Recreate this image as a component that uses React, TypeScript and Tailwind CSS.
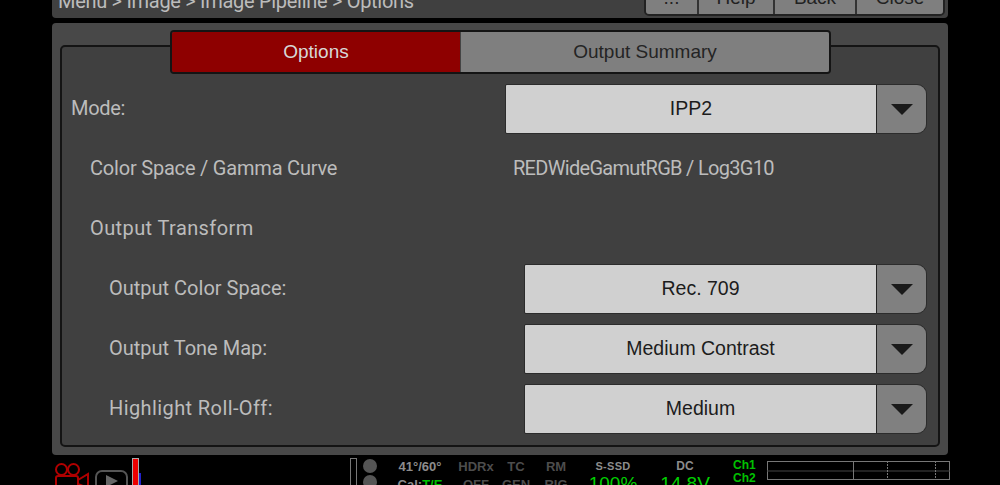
const labelFont = "font-['Roboto',sans-serif] text-[20px] text-[#bcbcbc] mb-[2px]";
const btnFont = "font-['Liberation_Sans',sans-serif]";

function Dropdown({ value, width }: { value: string; width: string }) {
  return (
    <div className={`flex h-[50px] ${width} overflow-hidden rounded-r-[10px] rounded-l-[2px] border border-[#2c2c2c]`}>
      <div className={`flex flex-1 items-center justify-center bg-[#d0d0d0] text-[19.5px] text-[#1c1c1c] ${btnFont}`}>
        {value}
      </div>
      <div className="flex w-[50px] items-center justify-center border-l border-[#222] bg-[#808080]">
        <svg width="24" height="12" viewBox="0 0 24 12">
          <path d="M1 1h22L12 12z" fill="#1a1a1a" />
        </svg>
      </div>
    </div>
  );
}

function Row({ label, indent, children }: { label: string; indent: string; children?: React.ReactNode }) {
  return (
    <div className="flex h-[50px] items-center justify-between">
      <span className={`${indent} ${labelFont}`}>{label}</span>
      {children}
    </div>
  );
}

function Stat({ top, bottom }: { top: string; bottom: string }) {
  return (
    <div className={`flex w-[40px] flex-col items-center text-[13px] font-bold leading-[18px] text-[#4d4d4d] ${btnFont}`}>
      <span>{top}</span>
      <span>{bottom}</span>
    </div>
  );
}

export default function App() {
  return (
    <div className="flex h-[485px] w-[1000px] flex-col overflow-hidden bg-black">
      {/* Title bar, cut off by the top of the picture */}
      <div className="mx-[52px] -mt-[22px] flex h-[40px] shrink-0 items-start justify-between rounded-b-[4px] bg-[#404040] pl-[6px] pr-[3px]">
        <span className={`mt-[8px] tracking-[-0.3px] ${labelFont}`}>Menu &gt; Image &gt; Image Pipeline &gt; Options</span>
        <div className={`flex h-[38px] items-end overflow-hidden rounded-b-[5px] border-2 border-[#222] text-[19px] text-[#222] ${btnFont}`}>
          <div className="flex h-full w-[53px] items-center justify-center border-r-2 border-[#333] bg-[#7f7f7f] pt-[2px]">...</div>
          <div className="flex h-full w-[76px] items-center justify-center border-r-2 border-[#333] bg-[#7f7f7f] pt-[2px]">Help</div>
          <div className="flex h-full w-[82px] items-center justify-center border-r-2 border-[#333] bg-[#7f7f7f] pt-[2px]">Back</div>
          <div className="flex h-full w-[86px] items-center justify-center bg-[#7f7f7f] pt-[2px]">Close</div>
        </div>
      </div>

      {/* Main panel */}
      <div className="mx-[52px] mt-[5px] h-[432px] shrink-0 rounded-[4px] bg-[#484848] px-[8px] pb-[8px] pt-[22px]">
        <div className="h-[402px] rounded-[5px] border-2 border-[#141414] bg-[#404040] pl-[10px] pr-[11px]">
          <div className={`-mt-[17px] ml-[98px] flex h-[44px] w-[661px] overflow-hidden rounded-[4px] border-2 border-[#141414] text-[19px] ${btnFont}`}>
            <div className="flex w-[289px] items-center justify-center border-r border-[#444] bg-[#8e0000] text-[#d8d8d8]">
              Options
            </div>
            <div className="flex flex-1 items-center justify-center bg-[#7f7f7f] text-[#242424]">
              Output Summary
            </div>
          </div>

          <div className="mt-[10px] flex flex-col gap-[10px]">
            <Row label="Mode:" indent="-ml-[1px] tracking-[-0.3px]">
              <Dropdown value="IPP2" width="w-[422px]" />
            </Row>
            <div className="flex h-[50px] items-center">
              <span className={`ml-[18px] w-[423px] tracking-[-0.2px] ${labelFont}`}>Color Space / Gamma Curve</span>
              <span className={`tracking-[-0.7px] ${labelFont}`}>REDWideGamutRGB / Log3G10</span>
            </div>
            <Row label="Output Transform" indent="ml-[18px] tracking-[0.4px]" />
            <Row label="Output Color Space:" indent="ml-[37px]">
              <Dropdown value="Rec. 709" width="w-[403px]" />
            </Row>
            <Row label="Output Tone Map:" indent="ml-[37px]">
              <Dropdown value="Medium Contrast" width="w-[403px]" />
            </Row>
            <Row label="Highlight Roll-Off:" indent="ml-[37px] tracking-[0.4px]">
              <Dropdown value="Medium" width="w-[403px]" />
            </Row>
          </div>
        </div>
      </div>

      {/* Status bar, cut off by the bottom of the picture */}
      <div className="flex h-[30px] shrink-0 items-start overflow-hidden">
        <svg className="ml-[55px] mt-[8px] shrink-0" width="34" height="24" viewBox="0 0 34 24" fill="none" stroke="#b00000" strokeWidth="2">
          <circle cx="6.5" cy="6.5" r="5.5" />
          <circle cx="18.5" cy="6.5" r="5.5" />
          <rect x="1" y="13" width="22" height="12" rx="2" />
          <path d="M23 17l10-6v14l-10-4z" />
        </svg>
        <svg className="ml-[6px] mt-[15px] shrink-0" width="33" height="18" viewBox="0 0 33 18" fill="none">
          <rect x="1" y="1" width="31" height="22" rx="6" stroke="#555" strokeWidth="2" />
          <path d="M11 5l12 6-12 6z" fill="#666" />
        </svg>
        <div className="ml-[4px] mt-[3px] flex shrink-0 items-start">
          <div className="h-[30px] w-[7px] border border-[#aaa] bg-[#ee0000]" />
          <div className="mt-[15px] h-[20px] w-[2px] bg-[#2222cc]" />
        </div>

        <div className="ml-[209px] mt-[3px] h-[30px] w-[7px] shrink-0 border border-[#777]" />
        <div className="ml-[6px] mt-[4px] flex shrink-0 flex-col gap-[2px]">
          <div className="h-[14px] w-[14px] rounded-full bg-[#555]" />
          <div className="h-[14px] w-[14px] rounded-full bg-[#555]" />
        </div>

        <div className={`ml-[13px] mt-[3px] flex w-[60px] shrink-0 flex-col items-center text-[13px] font-bold leading-[18px] text-[#8c8c8c] ${btnFont}`}>
          <span>41°/60°</span>
          <span>Cal:<span className="text-[#00c000]">T/E</span></span>
        </div>
        <div className="ml-[6px] mt-[3px] flex shrink-0">
          <Stat top="HDRx" bottom="OFF" />
          <Stat top="TC" bottom="GEN" />
          <Stat top="RM" bottom="RIG" />
        </div>

        <div className={`ml-[9px] mt-[3px] flex w-[56px] shrink-0 flex-col items-center ${btnFont}`}>
          <span className="text-[11px] font-bold leading-[16px] tracking-[0.3px] text-[#8c8c8c]">S-SSD</span>
          <span className="text-[19px] leading-[20px] text-[#00d000]">100%</span>
        </div>
        <div className={`ml-[16px] mt-[3px] flex w-[56px] shrink-0 flex-col items-center ${btnFont}`}>
          <span className="text-[12px] font-bold leading-[16px] text-[#8c8c8c]">DC</span>
          <span className="text-[19px] leading-[20px] text-[#00d000]">14.8V</span>
        </div>

        <div className={`ml-[20px] mt-[4px] flex w-[34px] shrink-0 flex-col text-[12px] font-bold leading-[13px] text-[#00c000] ${btnFont}`}>
          <span>Ch1</span>
          <span>Ch2</span>
        </div>
        <svg className="mt-[6px] shrink-0" width="183" height="20" viewBox="0 0 183 20" fill="none">
          <rect x="0.5" y="0.5" width="182" height="18" stroke="#777" />
          <path d="M0 10h183" stroke="#444" />
          <path d="M86.5 0v19" stroke="#777" />
          <path d="M120.5 0v19M168.5 0v19" stroke="#777" strokeDasharray="2 1" />
        </svg>
      </div>
    </div>
  );
}
